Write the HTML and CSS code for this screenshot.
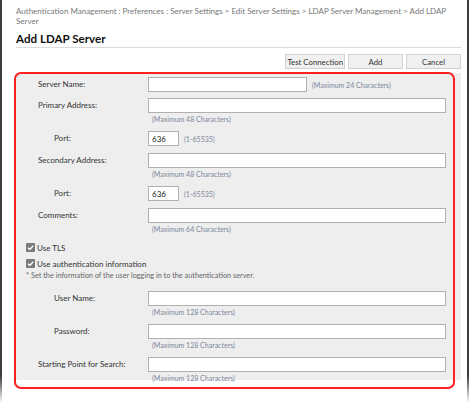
FILE: index.html
```html
<!DOCTYPE html>
<html lang="en">
<head>
    <meta charset="UTF-8">
    <title>Add LDAP Server</title>
    <link rel="stylesheet" href="styles.css">
</head>
<body>

<div class="frame">
<div class="page">

    <p class="crumbs">Authentication Management : Preferences : Server Settings &gt; Edit Server Settings &gt; LDAP Server Management &gt; Add LDAP Server</p>
    <h1 class="title">Add LDAP Server</h1>

    <!-- Botoes -->
    <div class="actions">
        <button class="btn">Test Connection</button>
        <button class="btn">Add</button>
        <button class="btn">Cancel</button>
    </div>

    <div class="panel">
        <div class="highlight"></div>

        <div class="field">
            <label class="label">Server Name:</label>
            <div class="control row">
                <input type="text" class="text mid">
                <span class="hint">(Maximum 24 Characters)</span>
            </div>
        </div>

        <div class="field">
            <label class="label">Primary Address:</label>
            <div class="control">
                <input type="text" class="text">
                <span class="hint below">(Maximum 48 Characters)</span>
            </div>
        </div>

        <div class="field port">
            <label class="label sub">Port:</label>
            <div class="control row">
                <input type="text" class="text small" value="636">
                <span class="hint">(1-65535)</span>
            </div>
        </div>

        <div class="field">
            <label class="label">Secondary Address:</label>
            <div class="control">
                <input type="text" class="text">
                <span class="hint below">(Maximum 48 Characters)</span>
            </div>
        </div>

        <div class="field port">
            <label class="label sub">Port:</label>
            <div class="control row">
                <input type="text" class="text small" value="636">
                <span class="hint">(1-65535)</span>
            </div>
        </div>

        <div class="field">
            <label class="label">Comments:</label>
            <div class="control">
                <input type="text" class="text">
                <span class="hint below">(Maximum 64 Characters)</span>
            </div>
        </div>

        <!-- Opcoes -->
        <div class="check">
            <svg class="box" viewBox="0 0 9 9"><rect width="9" height="9" rx="1" fill="#7a7a7a"/><path d="M2 4.7l1.8 1.8L7.2 2.8" stroke="#fff" stroke-width="1.4" fill="none"/></svg>
            <span>Use TLS</span>
        </div>
        <div class="check">
            <svg class="box" viewBox="0 0 9 9"><rect width="9" height="9" rx="1" fill="#7a7a7a"/><path d="M2 4.7l1.8 1.8L7.2 2.8" stroke="#fff" stroke-width="1.4" fill="none"/></svg>
            <span>Use authentication information</span>
        </div>
        <p class="note">* Set the information of the user logging in to the authentication server.</p>

        <div class="field">
            <label class="label sub">User Name:</label>
            <div class="control">
                <input type="text" class="text">
                <span class="hint below">(Maximum 128 Characters)</span>
            </div>
        </div>

        <div class="field">
            <label class="label sub">Password:</label>
            <div class="control">
                <input type="password" class="text">
                <span class="hint below">(Maximum 128 Characters)</span>
            </div>
        </div>

        <div class="field last">
            <label class="label">Starting Point for Search:</label>
            <div class="control">
                <input type="text" class="text">
                <span class="hint below">(Maximum 128 Characters)</span>
            </div>
        </div>
    </div>

</div>
</div>

</body>
</html>
```

FILE: styles.css
```css
body {
    margin: 0;
    padding: 0;
    background-color: #fff;
    font-family: Lato, "Open Sans", sans-serif;
    color: #333;
}
.frame {
    width: 469px;
    height: 407px;
    box-sizing: border-box;
    border-style: solid;
    border-width: 0 2px 0 2px;
    border-image: linear-gradient(to bottom, #3c3c3c 0, #3c3c3c 375px, #fff 402px) 1;
    overflow: hidden;
}
.page {
    padding: 6px 6px 0 14px;
}
.crumbs {
    margin: 0;
    padding-right: 6px;
    font-size: 8px;
    line-height: 10px;
    color: #777;
}
.title {
    margin: 5px 0 0;
    padding-bottom: 1px;
    font-size: 11.6px;
    line-height: 15px;
    font-weight: bold;
    color: #111;
    border-bottom: 1px solid #dcdcdc;
}
.actions {
    display: flex;
    justify-content: flex-end;
    gap: 3px;
    margin-top: 6px;
}
.btn {
    min-width: 55px;
    height: 15px;
    padding: 0 1px;
    font-family: inherit;
    font-size: 7.8px;
    color: #333;
    background-color: #f0f0f0;
    border: 1px solid #d2d2d2;
    border-radius: 0;
}
.panel {
    position: relative;
    margin-top: 4px;
    padding: 4px 16px 0 22px;
    height: 303px;
    background-color: #eeeeee;
}
/* marcacao vermelha */
.highlight {
    position: absolute;
    left: -2px;
    top: -1px;
    right: 6px;
    bottom: -9px;
    border: 2px solid #ff2020;
    border-radius: 7px;
}
.field {
    display: flex;
    margin-bottom: 6px;
}
.field.port {
    margin-bottom: 7px;
}
.field.last {
    margin-bottom: 0;
}
.label {
    width: 110px;
    flex: none;
    font-size: 8px;
    line-height: 15px;
    color: #333;
}
.label.sub {
    box-sizing: border-box;
    padding-left: 16px;
}
.control {
    flex: 1;
}
.control.row {
    display: flex;
    align-items: center;
}
.text {
    display: block;
    box-sizing: border-box;
    width: 298px;
    height: 15px;
    margin: 0;
    padding: 0 3px;
    font-family: inherit;
    font-size: 8px;
    color: #222;
    background-color: #fff;
    border: 1px solid #b0b0b0;
    border-radius: 0;
}
.text.mid {
    width: 159px;
}
.text.small {
    width: 31px;
}
.hint {
    margin-left: 5px;
    font-size: 7px;
    line-height: 12px;
    color: #7c879c;
}
.hint.below {
    display: block;
    margin-left: 4px;
}
.check {
    display: flex;
    align-items: center;
    gap: 2px;
    height: 13px;
    margin: 0 0 3px -12px;
    font-size: 8px;
    color: #333;
}
.box {
    width: 9px;
    height: 9px;
}
.note {
    margin: -3px 0 9px -12px;
    font-size: 7.3px;
    line-height: 12px;
    color: #666;
}
```
